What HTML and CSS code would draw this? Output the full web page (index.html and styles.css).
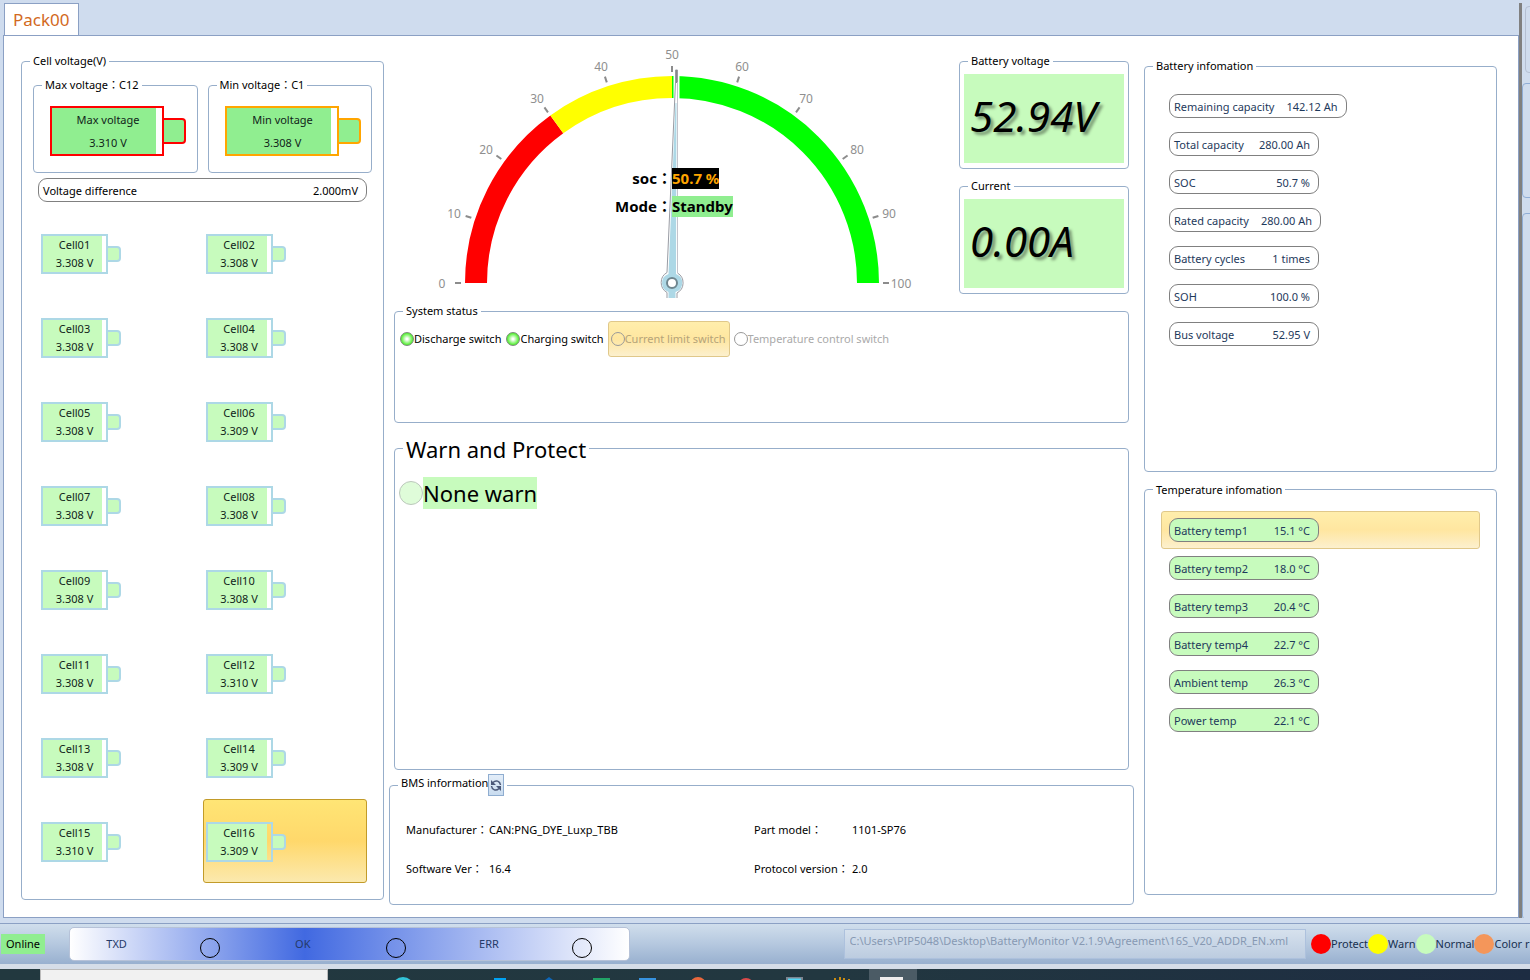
FILE: index.html
```html
<!DOCTYPE html>
<html lang="en">
<head>
<meta charset="utf-8">
<title>Battery Monitor</title>
<link rel="stylesheet" href="styles.css">
</head>
<body>
<div class="workspace">
  <div class="tabs">
    <div class="tab-strip" role="tablist"><button class="tab" role="tab" aria-selected="true">Pack00</button></div>
    <main class="panel">
      <fieldset class="group cells">
        <legend>Cell voltage(V)</legend>
        <div class="extremes">
          <fieldset class="group extreme">
            <legend>Max voltage：C12</legend>
            <div class="battery large red"><div class="body"><div class="fill"><span>Max voltage</span><span>3.310 V</span></div></div><div class="nub"></div></div>
          </fieldset>
          <fieldset class="group extreme">
            <legend>Min voltage：C1</legend>
            <div class="battery large orange"><div class="body"><div class="fill"><span>Min voltage</span><span>3.308 V</span></div></div><div class="nub"></div></div>
          </fieldset>
        </div>
        <div class="pill difference"><span>Voltage difference</span><span>2.000mV</span></div>
        <ul class="cell-grid">
          <li><div class="battery"><div class="body"><div class="fill"><span>Cell01</span><span>3.308 V</span></div></div><div class="nub"></div></div></li>
          <li><div class="battery"><div class="body"><div class="fill"><span>Cell02</span><span>3.308 V</span></div></div><div class="nub"></div></div></li>
          <li><div class="battery"><div class="body"><div class="fill"><span>Cell03</span><span>3.308 V</span></div></div><div class="nub"></div></div></li>
          <li><div class="battery"><div class="body"><div class="fill"><span>Cell04</span><span>3.308 V</span></div></div><div class="nub"></div></div></li>
          <li><div class="battery"><div class="body"><div class="fill"><span>Cell05</span><span>3.308 V</span></div></div><div class="nub"></div></div></li>
          <li><div class="battery"><div class="body"><div class="fill"><span>Cell06</span><span>3.309 V</span></div></div><div class="nub"></div></div></li>
          <li><div class="battery"><div class="body"><div class="fill"><span>Cell07</span><span>3.308 V</span></div></div><div class="nub"></div></div></li>
          <li><div class="battery"><div class="body"><div class="fill"><span>Cell08</span><span>3.308 V</span></div></div><div class="nub"></div></div></li>
          <li><div class="battery"><div class="body"><div class="fill"><span>Cell09</span><span>3.308 V</span></div></div><div class="nub"></div></div></li>
          <li><div class="battery"><div class="body"><div class="fill"><span>Cell10</span><span>3.308 V</span></div></div><div class="nub"></div></div></li>
          <li><div class="battery"><div class="body"><div class="fill"><span>Cell11</span><span>3.308 V</span></div></div><div class="nub"></div></div></li>
          <li><div class="battery"><div class="body"><div class="fill"><span>Cell12</span><span>3.310 V</span></div></div><div class="nub"></div></div></li>
          <li><div class="battery"><div class="body"><div class="fill"><span>Cell13</span><span>3.308 V</span></div></div><div class="nub"></div></div></li>
          <li><div class="battery"><div class="body"><div class="fill"><span>Cell14</span><span>3.309 V</span></div></div><div class="nub"></div></div></li>
          <li><div class="battery"><div class="body"><div class="fill"><span>Cell15</span><span>3.310 V</span></div></div><div class="nub"></div></div></li>
          <li class="selected"><div class="battery"><div class="body"><div class="fill"><span>Cell16</span><span>3.309 V</span></div></div><div class="nub"></div></div></li>
        </ul>
      </fieldset>

      <section class="center">
        <div class="overview">
          <div class="gauge">
            <svg viewBox="0 0 556 256" role="img" aria-label="State of charge gauge">
              <g transform="translate(278 239)">
                <g fill="none" stroke-width="22">
                  <path stroke="#f00" d="M-196 0A196 196 0 0 1 -115.2 -158.6"/>
                  <path stroke="#ff0" d="M-115.2 -158.6A196 196 0 0 1 0 -196"/>
                  <path stroke="#0f0" d="M0 -196A196 196 0 0 1 196 0"/>
                </g>
                <g stroke="#8c8c8c" stroke-width="2">
                  <path d="M-217 0h6"/><path d="M-217 0h6" transform="rotate(18)"/><path d="M-217 0h6" transform="rotate(36)"/><path d="M-217 0h6" transform="rotate(54)"/><path d="M-217 0h6" transform="rotate(72)"/><path d="M-217 0h6" transform="rotate(90)"/><path d="M-217 0h6" transform="rotate(108)"/><path d="M-217 0h6" transform="rotate(126)"/><path d="M-217 0h6" transform="rotate(144)"/><path d="M-217 0h6" transform="rotate(162)"/><path d="M-217 0h6" transform="rotate(180)"/>
                </g>
                <g class="scale">
                  <text x="-230" y="5">0</text><text x="-218" y="-65">10</text><text x="-186" y="-129">20</text><text x="-135" y="-180">30</text><text x="-71" y="-212">40</text><text x="0" y="-224">50</text><text x="70" y="-212">60</text><text x="134" y="-180">70</text><text x="185" y="-129">80</text><text x="217" y="-65">90</text><text x="229" y="5">100</text>
                </g>
                <path fill="#fff" d="M1.5 -208H7.500V-184H1.500z"/>
                <path fill="#fff" stroke="#999ca4" d="M-5 15V9.500A11.500 11.500 0 0 1 -5 -10.500L3.500 -201V-213H5.500V-10A11.500 11.500 0 0 1 5 10V15"/>
                <path fill="#c4c4cc" d="M5 -201h1V-10h-1z"/>
                <path fill="#add8e6" d="M-3.500 15V9A9.500 9.500 0 0 1 -3.500 -9L3.500 -180H4.500L4 -9A9.500 9.500 0 0 1 3.500 9V15z"/>
                <path stroke="#888" d="M4.500 -213V-200"/>
                <circle r="5" fill="#fff" stroke="#6f868f" stroke-width="2"/>
              </g>
            </svg>
            <dl class="readout">
              <dt>soc：</dt><dd><span class="soc">50.7 %</span></dd>
              <dt>Mode：</dt><dd><span class="mode">Standby</span></dd>
            </dl>
          </div>
          <div class="meters">
            <fieldset class="group meter"><legend>Battery voltage</legend><output>52.94V</output></fieldset>
            <fieldset class="group meter"><legend>Current</legend><output>0.00A</output></fieldset>
          </div>
        </div>
        <fieldset class="group system">
          <legend>System status</legend>
          <div class="switches">
            <label class="switch"><input type="radio" name="discharge" checked>Discharge switch</label>
            <label class="switch"><input type="radio" name="charging" checked>Charging switch</label>
            <label class="switch off highlighted"><input type="radio" name="limit" disabled>Current limit switch</label>
            <label class="switch off"><input type="radio" name="temperature" disabled>Temperature control switch</label>
          </div>
        </fieldset>
        <fieldset class="group warn">
          <legend>Warn and Protect</legend>
          <label class="warning"><input type="radio" name="warning" disabled><span>None warn</span></label>
        </fieldset>
        <fieldset class="group bms">
          <legend><span>BMS information</span><button class="refresh" aria-label="Refresh"><svg viewBox="0 0 12 14"><g fill="none" stroke="#4b5878" stroke-width="1.500"><path d="M3 4.500C6 1.500 10 3 10.500 7"/><path d="M9 10.500C6 13.500 2 12 1.500 8"/></g><path fill="#4b5878" d="M1 2V7H6zM11 13V8H6z"/></svg></button></legend>
          <dl class="facts">
            <dt>Manufacturer：</dt><dd>CAN:PNG_DYE_Luxp_TBB</dd><dt>Part model：</dt><dd>1101-SP76</dd>
            <dt>Software Ver：</dt><dd>16.4</dd><dt>Protocol version：</dt><dd>2.0</dd>
          </dl>
        </fieldset>
      </section>

      <section class="right">
        <fieldset class="group info">
          <legend>Battery infomation</legend>
          <ul class="rows">
            <li><div class="pill"><span>Remaining capacity</span><span>142.12 Ah</span></div></li>
            <li><div class="pill"><span>Total capacity</span><span>280.00 Ah</span></div></li>
            <li><div class="pill"><span>SOC</span><span>50.7 %</span></div></li>
            <li><div class="pill"><span>Rated capacity</span><span>280.00 Ah</span></div></li>
            <li><div class="pill"><span>Battery cycles</span><span>1 times</span></div></li>
            <li><div class="pill"><span>SOH</span><span>100.0 %</span></div></li>
            <li><div class="pill"><span>Bus voltage</span><span>52.95 V</span></div></li>
          </ul>
        </fieldset>
        <fieldset class="group info">
          <legend>Temperature infomation</legend>
          <ul class="rows green">
            <li class="highlighted"><div class="pill"><span>Battery temp1</span><span>15.1 °C</span></div></li>
            <li><div class="pill"><span>Battery temp2</span><span>18.0 °C</span></div></li>
            <li><div class="pill"><span>Battery temp3</span><span>20.4 °C</span></div></li>
            <li><div class="pill"><span>Battery temp4</span><span>22.7 °C</span></div></li>
            <li><div class="pill"><span>Ambient temp</span><span>26.3 °C</span></div></li>
            <li><div class="pill"><span>Power temp</span><span>22.1 °C</span></div></li>
          </ul>
        </fieldset>
      </section>
    </main>
  </div>
  <div class="splitter"></div>
  <aside class="side"><div class="stub first"></div><div class="stub second"></div><div class="stub third"></div></aside>
</div>
<footer class="status">
  <span class="online">Online</span>
  <div class="signals"><span>TXD</span><i></i><span>OK</span><i></i><span>ERR</span><i></i></div>
  <input class="path" type="text" disabled aria-label="Agreement file" value="C:\Users\PIP5048\Desktop\BatteryMonitor V2.1.9\Agreement\16S_V20_ADDR_EN.xml">
  <div class="key"><i class="protect"></i>Protect<i class="warned"></i>Warn<i class="normal"></i>Normal<i class="remark"></i>Color r</div>
</footer>
<div class="taskbar">
  <div class="search"></div>
  <svg class="apps" viewBox="0 0 540 11">
    <circle cx="9" cy="19" r="11" fill="#32c3d8"/>
    <path fill="#00a2f2" d="M100 9h12v2h-12z"/>
    <path fill="#0d66b8" d="M151 11l4-3 4 3z"/>
    <path fill="#21a366" d="M199 9h17v2h-17z"/>
    <path fill="#3793e0" d="M245 9h17v2h-17z"/>
    <circle cx="304" cy="16" r="8" fill="#e8673c"/>
    <circle cx="352" cy="17" r="8" fill="#dc4a4a"/>
    <path fill="#7c8490" d="M392 8h17v3h-17z"/><path fill="#55d6f4" d="M394 9.500h13V11h-13z"/>
    <path stroke="#c98b10" stroke-width="2" d="M441 9v2M446 8v3M450 9v2M455 10v1"/>
    <path fill="#4b5b65" d="M475 0h48v11h-48z"/><path fill="#f0eded" d="M486 8h23v3h-23z"/>
  </svg>
</div>
</body>
</html>
```
FILE: styles.css
```css
* { box-sizing: border-box; }
body {
  margin: 0;
  height: 100vh;
  display: flex;
  flex-direction: column;
  overflow: hidden;
  background: #cfdcee;
  color: #000;
  font: 11px/16px "Noto Sans", "Noto Sans CJK TC", sans-serif;
}
ul, dl, dd { margin: 0; padding: 0; list-style: none; }
button, input { font: inherit; margin: 0; }

.workspace { flex: 1; display: flex; min-height: 0; padding: 3px 0 5px 3px; }
.tabs { flex: 1; display: flex; flex-direction: column; min-width: 0; }
.tab-strip { display: flex; padding-left: 1px; }
.tab {
  height: 33px;
  margin-bottom: -1px;
  padding: 0 8px;
  border: 1px solid #8ba0c4;
  border-bottom: 0;
  background: #fff;
  color: #d2691e;
  font-size: 17px;
}
.panel {
  flex: 1;
  display: grid;
  grid-template-columns: minmax(0, 368fr) minmax(0, 755fr) minmax(0, 353fr);
  min-height: 0;
  padding: 0 21px 0 17px;
  border: 1px solid #8ba0c4;
  background: #fff;
}
.splitter { width: 3px; background: #808080; }
.side { width: 8px; overflow: hidden; }
.stub { width: 24px; border: 1px solid #8fadd6; border-radius: 4px; }
.first { height: 67px; margin: 3px 0 10px 3px; border-color: #b4bfd2; }
.second { height: 115px; margin-bottom: 15px; }
.third { height: 707px; }

.group {
  min-width: 0;
  margin: 0;
  padding: 0;
  border: 1px solid #97aeca;
  border-radius: 4px;
}
.group legend { margin-left: 8px; padding: 0 3px; height: 16px; }

.cells { margin: 17px 5px 17px 0; }
.extremes { display: flex; gap: 10px; margin: 8px 11px 0; }
.extreme { flex: 1; height: 96px; }
.extreme .battery { margin: 13px 0 0 16px; }

.battery { display: flex; align-items: center; --line: #add8e6; --fill: #c7fbbd; color: #10241a; }
.battery .body { flex: none; width: 67px; height: 40px; border: 2px solid var(--line); padding-right: 4px; }
.battery .fill { height: 100%; background: var(--fill); display: flex; flex-direction: column; text-align: center; line-height: 18px; padding-left: 4px; }
.battery .nub { flex: none; width: 13px; height: 16px; border: 2px solid var(--line); border-left: 0; border-radius: 0 4px 4px 0; background: var(--fill); }
.large { --fill: #90ee90; }
.red { --line: #f00; }
.orange { --line: #ffa500; }
.battery.large .body { width: 114px; height: 50px; padding-right: 6px; }
.battery.large .fill { line-height: 23px; padding-left: 8px; }
.battery.large .nub { width: 22px; height: 26px; }

.pill {
  display: flex;
  justify-content: space-between;
  gap: 12px;
  height: 24px;
  padding: 0 8px 0 4px;
  border: 1px solid #808080;
  border-radius: 9px;
  line-height: 23px;
  white-space: nowrap;
}
.difference { margin: 5px 16px 9px; }
.cell-grid { display: grid; grid-template-columns: 1fr 1fr; grid-auto-rows: 84px; margin: 0 16px; }
.cell-grid li { display: flex; align-items: center; padding: 1px 0 0 2px; border: 1px solid transparent; border-radius: 3px; }
.cell-grid .selected { border-color: #c29b29; background: linear-gradient(#ffe575, #ffd86b 50%, #fbe9ae); }

.center { display: flex; flex-direction: column; min-width: 0; margin: 8px 10px 12px 0; }
.overview { display: flex; padding: 0 5px; }
.gauge { position: relative; flex: 1; padding-right: 9px; }
.gauge svg { display: block; width: 100%; height: 256px; }
.scale { fill: #8f8f8f; font-size: 12px; text-anchor: middle; }
.readout {
  position: absolute;
  top: 120px;
  left: 0;
  right: 9px;
  display: grid;
  grid-template-columns: 1fr 1fr;
  grid-auto-rows: 28px;
  align-items: center;
  font-size: 15px;
  font-weight: bold;
}
.readout dt { text-align: right; }
.readout span { display: inline-block; line-height: 21px; }
.soc { background: #000; color: #ffa500; }
.mode { background: #90ee90; }
.meters { width: 170px; padding-top: 9px; }
.meter { height: 116px; margin-bottom: 9px; }
.meter output {
  display: block;
  height: 89px;
  margin: 5px 4px 4px;
  padding-left: 6px;
  background: #c7fbbd;
  font-size: 42px;
  font-style: italic;
  line-height: 84px;
  text-shadow: 3px 3px 3px rgba(0, 0, 0, .4);
}
.system { height: 120px; margin: 0 5px 9px; }
.switches { display: flex; gap: 3px; padding-left: 4px; margin-top: 2px; }
.switch { display: flex; align-items: center; height: 36px; border: 1px solid transparent; border-radius: 3px; white-space: nowrap; }
.switch input { appearance: none; width: 14px; height: 14px; border: 1px solid #7b8b7b; border-radius: 50%; background: #fff; }
.switch input:checked { background: radial-gradient(#fff 10%, #5cf03c 65%, #4ccc3a); }
.off { color: #aaa; }
.off input { border-color: #999; }
.switch.highlighted { padding: 0 3px 0 2px; color: #b5a47a; }
.switch.highlighted input { background: none; }
.highlighted { border-color: #e0c88a !important; background: linear-gradient(#ffeeac, #ffe6a0 50%, #fcf0ce); }
.warn { flex: 1; margin: 0 5px 4px; }
.warn legend { height: 32px; font-size: 22px; line-height: 34px; }
.warning { display: flex; align-items: center; margin: 13px 4px; }
.warning input { appearance: none; width: 24px; height: 24px; border: 1px solid #bcc8bc; border-radius: 50%; background: #dffcd9; }
.warning span { background: #c7fbbd; font-size: 22px; line-height: 32px; }
.bms { height: 131px; }
.bms legend { display: flex; height: 22px; line-height: 18px; }
.refresh { width: 16px; height: 22px; padding: 1px; border: 1px solid #8fadd0; background: linear-gradient(#e3edf8, #c9dcef); }
.refresh svg { display: block; width: 12px; height: 14px; }
.facts { display: grid; grid-template-columns: 83px 265px 98px 1fr; grid-auto-rows: 39px; align-items: center; padding: 14px 16px; white-space: nowrap; }

.right { display: flex; flex-direction: column; gap: 10px; margin: 22px 0; min-width: 0; }
.info { flex: 1; }
.info .rows { margin: 13px 16px 0; color: #1e395b; }
.rows li { display: flex; height: 38px; padding: 6px 7px; border: 1px solid transparent; border-radius: 3px; }
.rows .pill { min-width: 150px; }
.green .pill { background: #c7fbbd; }

.status {
  display: flex;
  align-items: center;
  height: 41px;
  flex: none;
  padding-left: 1px;
  border-top: 1px solid #8ba0c4;
  background: linear-gradient(#d0deec, #b5c8df 50%, #98b0cf);
  white-space: nowrap;
  overflow: hidden;
}
.online { flex: none; padding: 0 5px; background: #90ee90; line-height: 20px; }
.signals {
  display: grid;
  grid-template-columns: repeat(6, 1fr);
  justify-items: center;
  align-items: center;
  flex: 1 1 560px;
  height: 34px;
  margin-left: 24px;
  border: 1px solid #b6c2d8;
  border-radius: 5px;
  background: linear-gradient(90deg, #fff, #4169e1 42%, #fff);
  color: #253a68;
}
.signals i { width: 20px; height: 20px; margin-top: 8px; border: 1px solid #000; border-radius: 50%; }
.path {
  flex: 1 1 462px;
  min-width: 0;
  height: 30px;
  margin: 0 5px 0 214px;
  padding: 0 5px 7px;
  border: 1px solid #adc1dd;
  background: linear-gradient(#d6e1ed, #bccce0);
  color: #8799b3;
}
.key { display: flex; align-items: center; flex: none; width: 219px; color: #17304f; }
.key i { flex: none; width: 20px; height: 20px; border-radius: 50%; }
.protect { background: #f00; }
.warned { background: #ff0; }
.normal { background: #c7fbbd; }
.remark { background: #f4965a; }
.taskbar { display: flex; flex: none; height: 16px; border-top: 5px solid #d5dde8; background: linear-gradient(90deg, #22383f, #223740 55%, #1d2c42); }
.search { width: 288px; margin-left: 40px; background: #f1f1f1; border: 1px solid #bbb; border-bottom: 0; }
.apps { display: block; width: 540px; height: 11px; margin-left: 66px; }
```
